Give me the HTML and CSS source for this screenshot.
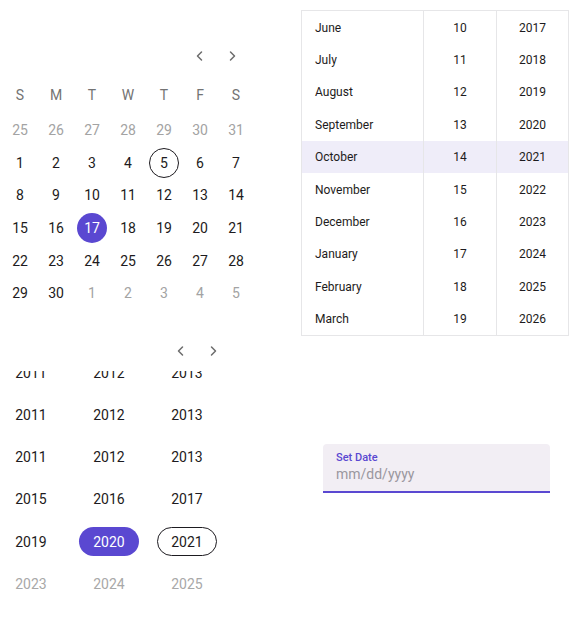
FILE: index.html
```html
<!DOCTYPE html>
<html lang="en">
<head>
<meta charset="utf-8">
<title>Date pickers</title>
<link rel="stylesheet" href="styles.css">
</head>
<body>
<div class="page">
  <div class="left">
    <section class="cal">
      <div class="nav">
        <button class="navbtn" aria-label="Previous month"><svg viewBox="0 0 16 16" width="16" height="16"><polyline points="9.5,4 5.5,8 9.5,12"/></svg></button>
        <button class="navbtn" aria-label="Next month"><svg viewBox="0 0 16 16" width="16" height="16"><polyline points="6.5,4 10.5,8 6.5,12"/></svg></button>
      </div>
      <div class="weekdays">
        <span>S</span><span>M</span><span>T</span><span>W</span><span>T</span><span>F</span><span>S</span>
      </div>
      <div class="days">
        <span class="day out">25</span><span class="day out">26</span><span class="day out">27</span><span class="day out">28</span><span class="day out">29</span><span class="day out">30</span><span class="day out">31</span>
        <span class="day">1</span><span class="day">2</span><span class="day">3</span><span class="day">4</span><span class="day"><span class="mark today">5</span></span><span class="day">6</span><span class="day">7</span>
        <span class="day">8</span><span class="day">9</span><span class="day">10</span><span class="day">11</span><span class="day">12</span><span class="day">13</span><span class="day">14</span>
        <span class="day">15</span><span class="day">16</span><span class="day"><span class="mark selected">17</span></span><span class="day">18</span><span class="day">19</span><span class="day">20</span><span class="day">21</span>
        <span class="day">22</span><span class="day">23</span><span class="day">24</span><span class="day">25</span><span class="day">26</span><span class="day">27</span><span class="day">28</span>
        <span class="day">29</span><span class="day">30</span><span class="day out">1</span><span class="day out">2</span><span class="day out">3</span><span class="day out">4</span><span class="day out">5</span>
      </div>
    </section>
    <section class="years">
      <div class="nav nav-years">
        <button class="navbtn" aria-label="Previous years"><svg viewBox="0 0 16 16" width="16" height="16"><polyline points="9.5,4 5.5,8 9.5,12"/></svg></button>
        <button class="navbtn" aria-label="Next years"><svg viewBox="0 0 16 16" width="16" height="16"><polyline points="6.5,4 10.5,8 6.5,12"/></svg></button>
      </div>
      <div class="year-view">
        <div class="year-grid">
          <span class="year"><span class="pill">2011</span></span><span class="year"><span class="pill">2012</span></span><span class="year"><span class="pill">2013</span></span>
          <span class="year"><span class="pill">2011</span></span><span class="year"><span class="pill">2012</span></span><span class="year"><span class="pill">2013</span></span>
          <span class="year"><span class="pill">2011</span></span><span class="year"><span class="pill">2012</span></span><span class="year"><span class="pill">2013</span></span>
          <span class="year"><span class="pill">2015</span></span><span class="year"><span class="pill">2016</span></span><span class="year"><span class="pill">2017</span></span>
          <span class="year"><span class="pill">2019</span></span><span class="year"><span class="pill selected">2020</span></span><span class="year"><span class="pill current">2021</span></span>
          <span class="year out"><span class="pill">2023</span></span><span class="year out"><span class="pill">2024</span></span><span class="year out"><span class="pill">2025</span></span>
        </div>
      </div>
    </section>
  </div>
  <div class="right">
    <div class="wheel">
      <div class="wrow"><span class="wm">June</span><span class="wd">10</span><span class="wy">2017</span></div>
      <div class="wrow"><span class="wm">July</span><span class="wd">11</span><span class="wy">2018</span></div>
      <div class="wrow"><span class="wm">August</span><span class="wd">12</span><span class="wy">2019</span></div>
      <div class="wrow"><span class="wm">September</span><span class="wd">13</span><span class="wy">2020</span></div>
      <div class="wrow active"><span class="wm">October</span><span class="wd">14</span><span class="wy">2021</span></div>
      <div class="wrow"><span class="wm">November</span><span class="wd">15</span><span class="wy">2022</span></div>
      <div class="wrow"><span class="wm">December</span><span class="wd">16</span><span class="wy">2023</span></div>
      <div class="wrow"><span class="wm">January</span><span class="wd">17</span><span class="wy">2024</span></div>
      <div class="wrow"><span class="wm">February</span><span class="wd">18</span><span class="wy">2025</span></div>
      <div class="wrow"><span class="wm">March</span><span class="wd">19</span><span class="wy">2026</span></div>
    </div>
    <label class="field">
      <span class="field-label">Set Date</span>
      <span class="field-input">mm/dd/yyyy</span>
    </label>
  </div>
</div>
</body>
</html>
```
FILE: styles.css
```css
* { box-sizing: border-box; }
html, body { margin: 0; padding: 0; background: #ffffff; }
body {
  font-family: Roboto, "Noto Sans", "Liberation Sans", sans-serif;
  color: #1d1b20;
  width: 572px;
  height: 630px;
  overflow: hidden;
}
.page {
  display: grid;
  grid-template-columns: 301px 1fr;
}

/* ---------- calendar ---------- */
.cal { padding-top: 40px; width: 256px; }
.nav {
  display: flex;
  justify-content: flex-end;
  height: 32px;
  padding-right: 8px;
}
.navbtn {
  width: 32px;
  height: 32px;
  padding: 0;
  border: 0;
  background: none;
  display: flex;
  align-items: center;
  justify-content: center;
}
.navbtn svg polyline {
  fill: none;
  stroke: #6b6b6b;
  stroke-width: 1.5;
  stroke-linecap: round;
  stroke-linejoin: round;
}
.weekdays, .days {
  display: grid;
  grid-template-columns: repeat(7, 36px);
  padding-left: 2px;
}
.weekdays {
  margin-top: 7px;
  height: 32px;
  align-items: center;
}
.weekdays span {
  text-align: center;
  font-size: 14px;
  color: #737373;
}
.days {
  margin-top: 3px;
  grid-auto-rows: 32.6px;
}
.day {
  display: flex;
  align-items: center;
  justify-content: center;
  font-size: 14px;
  color: #1d1b20;
}
.day.out { color: #a3a3a3; }
.mark {
  width: 30px;
  height: 30px;
  border-radius: 50%;
  display: flex;
  align-items: center;
  justify-content: center;
}
.mark.today { border: 1px solid #1d1b20; }
.mark.selected { background: #5a48d1; color: #ffffff; }

/* ---------- years ---------- */
.years { margin-top: 25.4px; }
.nav-years { width: 229px; padding-right: 0; }
.year-view {
  margin-top: 4.5px;
  height: 258.5px;
  overflow: hidden;
}
.year-grid {
  margin-top: -19.9px;
  display: grid;
  grid-template-columns: repeat(3, 60px);
  column-gap: 18px;
  grid-auto-rows: 42.25px;
  padding-left: 1px;
}
.year {
  display: flex;
  align-items: center;
  justify-content: center;
  font-size: 14px;
  color: #1d1b20;
}
.year.out { color: #a8a8a8; }
.pill {
  width: 60px;
  height: 29px;
  border-radius: 15px;
  display: flex;
  align-items: center;
  justify-content: center;
}
.pill.selected { background: #5a48d1; color: #ffffff; }
.pill.current { border: 1px solid #1d1b20; }

/* ---------- wheel ---------- */
.wheel {
  margin-top: 10px;
  width: 268px;
  border: 1px solid #e6e6e8;
}
.wrow {
  display: grid;
  grid-template-columns: 121px 73px 72px;
  height: 32.4px;
  font-size: 12px;
  color: #1d1b20;
}
.wrow > span {
  display: flex;
  align-items: center;
  padding-top: 1px;
}
.wm { padding-left: 13px; }
.wd, .wy {
  justify-content: center;
  border-left: 1px solid #e6e6e8;
}
.wrow.active { background: #efedf9; }

/* ---------- text field ---------- */
.field {
  display: flex;
  flex-direction: column;
  margin-top: 108px;
  margin-left: 22px;
  width: 227px;
  height: 49px;
  background: #f2eef4;
  border-radius: 4px 4px 0 0;
  border-bottom: 2px solid #5a48d1;
  padding: 7px 13px 0;
}
.field-label {
  font-size: 11px;
  font-weight: 500;
  color: #5a48d1;
  line-height: 13px;
}
.field-input {
  margin-top: 0;
  font-size: 14px;
  color: #9a979e;
  line-height: 20px;
}
```
